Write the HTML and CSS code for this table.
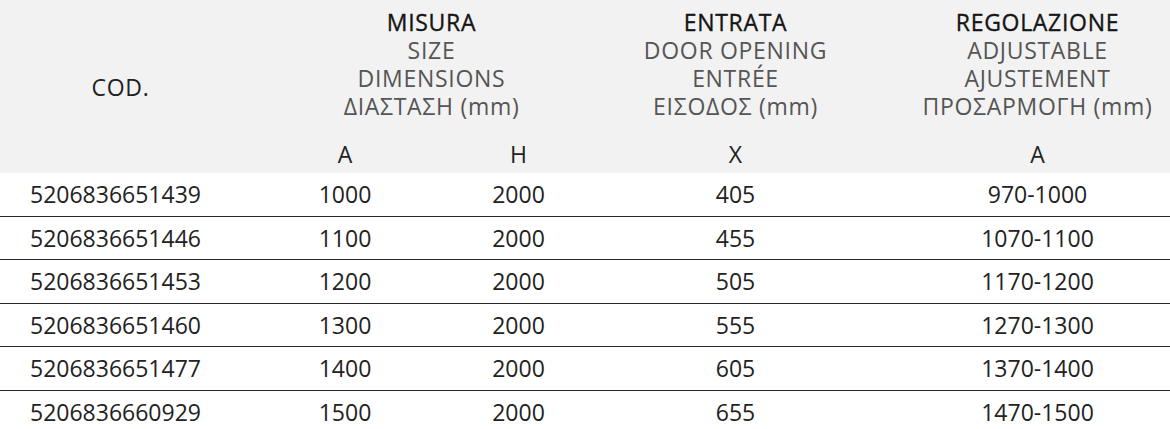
FILE: index.html
```html
<!DOCTYPE html>
<html lang="it">
<head>
<meta charset="utf-8">
<title>Misure</title>
<link rel="stylesheet" href="styles.css">
</head>
<body>
<table class="spec">
  <colgroup>
    <col class="c-cod">
    <col class="c-a">
    <col class="c-h">
    <col class="c-x">
    <col class="c-reg">
  </colgroup>
  <thead>
    <tr class="head-top">
      <th rowspan="2" class="cod-head">COD.</th>
      <th colspan="2" class="group">
        <span class="main">MISURA</span>
        <span class="sub">SIZE</span>
        <span class="sub">DIMENSIONS</span>
        <span class="sub">ΔΙΑΣΤΑΣΗ (mm)</span>
      </th>
      <th class="group">
        <span class="main">ENTRATA</span>
        <span class="sub">DOOR OPENING</span>
        <span class="sub">ENTRÉE</span>
        <span class="sub">ΕΙΣΟΔΟΣ (mm)</span>
      </th>
      <th class="group reg">
        <span class="main">REGOLAZIONE</span>
        <span class="sub">ADJUSTABLE</span>
        <span class="sub">AJUSTEMENT</span>
        <span class="sub">ΠΡΟΣΑΡΜΟΓΗ (mm)</span>
      </th>
    </tr>
    <tr class="head-sub">
      <th>A</th>
      <th>H</th>
      <th>X</th>
      <th class="reg">A</th>
    </tr>
  </thead>
  <tbody>
    <tr><td class="code">5206836651439</td><td>1000</td><td>2000</td><td>405</td><td class="reg">970-1000</td></tr>
    <tr><td class="code">5206836651446</td><td>1100</td><td>2000</td><td>455</td><td class="reg">1070-1100</td></tr>
    <tr><td class="code">5206836651453</td><td>1200</td><td>2000</td><td>505</td><td class="reg">1170-1200</td></tr>
    <tr><td class="code">5206836651460</td><td>1300</td><td>2000</td><td>555</td><td class="reg">1270-1300</td></tr>
    <tr><td class="code">5206836651477</td><td>1400</td><td>2000</td><td>605</td><td class="reg">1370-1400</td></tr>
    <tr><td class="code">5206836660929</td><td>1500</td><td>2000</td><td>655</td><td class="reg">1470-1500</td></tr>
  </tbody>
</table>
</body>
</html>
```

FILE: styles.css
```css
* { box-sizing: border-box; }

html, body {
  margin: 0;
  padding: 0;
  background: #ffffff;
}

body {
  font-family: "Open Sans", "Noto Sans", "Liberation Sans", sans-serif;
  font-size: 23px;
  color: #222222;
  overflow: hidden;
}

.spec {
  width: 1170px;
  table-layout: fixed;
  border-collapse: separate;
  border-spacing: 0;
}

.c-cod { width: 258px; }
.c-a { width: 174px; }
.c-h { width: 173px; }
.c-x { width: 261px; }
.c-reg { width: 304px; }

.spec th {
  background: #f2f2f2;
  font-weight: 400;
  color: #222222;
  text-align: center;
  padding: 0;
  line-height: 28px;
  letter-spacing: 0.7px;
}

.head-top th { height: 134px; }

.spec th.group {
  vertical-align: top;
  padding-top: 8px;
}

.spec th.cod-head {
  vertical-align: middle;
  padding-right: 17px;
}

.group span {
  display: block;
}

.group .main {
  color: #151515;
  font-weight: 400;
  -webkit-text-stroke: 0.35px #151515;
}

.group .sub {
  color: #555555;
}

.head-sub th {
  height: 39px;
  vertical-align: middle;
  letter-spacing: 0;
}

.spec th.reg,
.spec td.reg {
  padding-left: 39px;
}

.spec td {
  height: 43.5px;
  padding: 0;
  text-align: center;
  vertical-align: middle;
  line-height: 28px;
  border-bottom: 1px solid #2a2a2a;
  color: #222222;
}

.spec tbody tr:last-child td {
  border-bottom: none;
}

.spec td.code {
  text-align: left;
  padding-left: 30px;
}
```
